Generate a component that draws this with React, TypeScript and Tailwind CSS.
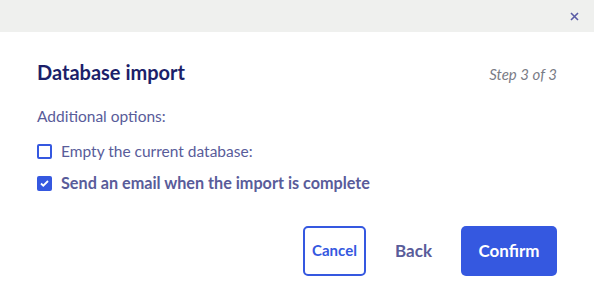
import React from 'react';

export default function App() {
  return (
    <div className="h-[303px] w-[594px] bg-white font-['Lato',sans-serif] text-[#595c9a]">
      <div className="flex h-8 items-center justify-end bg-[#eff0ee] pr-[15px]">
        <button className="text-[#5a5ca5]" aria-label="Close">
          <svg width="9" height="9" viewBox="0 0 9 9" fill="none" stroke="currentColor" strokeWidth="1.6">
            <path d="M1 1l7 7M8 1l-7 7" />
          </svg>
        </button>
      </div>

      <div className="px-[37px] pt-[28px]">
        <div className="flex items-baseline justify-between">
          <h1 className="text-[20px] leading-[24px] font-bold text-[#1c1f6a]">Database import</h1>
          <span className="text-[15px] italic text-[#7a7c86]">Step 3 of 3</span>
        </div>

        <p className="mt-[20px] text-[15.5px] leading-[20px]">Additional options:</p>

        <div className="mt-[16px] flex flex-col gap-[12px]">
          <label className="flex h-[20px] items-center gap-[9px] text-[15.5px]">
            <span className="h-[15px] w-[15px] rounded-[2px] border-2 border-[#3558e0] bg-white" />
            Empty the current database:
          </label>
          <label className="flex h-[20px] items-center gap-[9px] text-[16.2px] font-bold">
            <span className="flex h-[15px] w-[15px] items-center justify-center rounded-[2px] bg-[#3558e0]">
              <svg width="9" height="7" viewBox="0 0 9 7" fill="none" stroke="white" strokeWidth="1.8">
                <path d="M1 3.5l2.3 2.2L8 1" />
              </svg>
            </span>
            Send an email when the import is complete
          </label>
        </div>

        <div className="mt-[32px] flex items-center justify-end">
          <button className="h-[50px] w-[63px] rounded-[5px] border-2 border-[#3558e0] text-[15px] font-bold text-[#3558e0]">
            Cancel
          </button>
          <button className="h-[50px] w-[95px] text-[17px] font-bold text-[#595c9a]">Back</button>
          <button className="h-[50px] w-[96px] rounded-[5px] bg-[#3558e0] text-[17px] font-bold text-white">
            Confirm
          </button>
        </div>
      </div>
    </div>
  );
}
